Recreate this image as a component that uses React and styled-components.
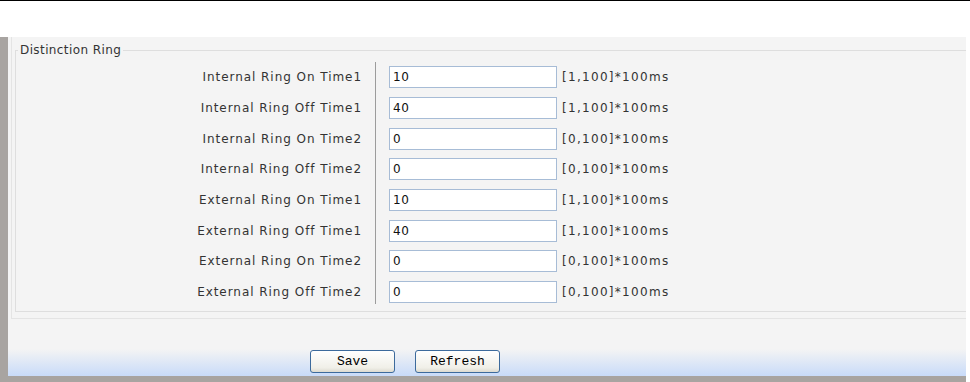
import React from "react";
import styled, { createGlobalStyle } from "styled-components";

const Global = createGlobalStyle`
  html, body { margin: 0; padding: 0; background: #fff; }
  body { font-family: Tahoma, "DejaVu Sans", Verdana, sans-serif; font-size: 12px; color: #222; }
`;

const Page = styled.div`
  width: 970px;
  height: 382px;
  overflow: hidden;
  border-top: 1px solid #000;
  box-sizing: border-box;
  padding-top: 36px;
`;

const Panel = styled.div`
  width: 966px;
  height: 345px;
  box-sizing: border-box;
  background: #f4f4f4;
  border-left: 8px solid #a8a4a1;
  border-bottom: 6px solid #a8a4a1;
  display: flex;
  flex-direction: column;
`;

const Outer = styled.div`
  margin-left: 3px;
  border-left: 1px solid #e4e4e4;
  border-bottom: 1px solid #e4e4e4;
  padding: 6px 0 6px 3px;
`;

const Fieldset = styled.fieldset`
  margin: 0;
  padding: 0 0 3px 0;
  border: 1px solid #dedede;
  border-right: none;
  min-width: 0;
`;

const Legend = styled.legend`
  padding: 0 2px;
  margin-left: 2px;
  color: #333;
  font-size: 12px;
  letter-spacing: 0.4px;
`;

const Grid = styled.div`
  display: grid;
  grid-template-columns: 346px 14px 181px 1fr;
  grid-auto-rows: 30.7px;
  padding-top: 5px;
`;

const Label = styled.div`
  grid-column: 1;
  display: flex;
  align-items: center;
  justify-content: flex-end;
  color: #333;
  letter-spacing: 0.95px;
`;

const Sep = styled.div`
  grid-column: 2;
  grid-row: 1 / span 8;
  border-right: 1px solid #9c9c9c;
  margin-bottom: 4px;
`;

const Cell = styled.div`
  grid-column: 3;
  display: flex;
  align-items: center;
  padding-left: 13px;
`;

const Input = styled.input`
  width: 168px;
  height: 22px;
  box-sizing: border-box;
  border: 1px solid #a7bcd6;
  background: #fff;
  padding: 0 3px;
  font-family: Tahoma, "DejaVu Sans", sans-serif;
  font-size: 12px;
  letter-spacing: 0.6px;
  color: #111;
  outline: none;
`;

const Hint = styled.div`
  grid-column: 4;
  display: flex;
  align-items: center;
  padding-left: 5px;
  color: #333;
  letter-spacing: 1.3px;
`;

const Spacer = styled.div`
  flex: 1;
`;

const ButtonBar = styled.div`
  height: 27px;
  background: linear-gradient(#f4f4f4, #c8dbf9);
  display: flex;
  justify-content: flex-start;
  align-items: flex-start;
  gap: 20px;
  padding-left: 302px;
`;

const Button = styled.button`
  width: 85px;
  height: 23px;
  margin-top: 1px;
  border: 1px solid #3c6a9c;
  border-radius: 3px;
  background: linear-gradient(#ffffff, #f0efe8 80%, #dcdad0);
  font-family: "Liberation Mono", "DejaVu Sans Mono", monospace;
  font-size: 13px;
  color: #000;
  padding: 0;
`;

const rows = [
  ["Internal Ring On Time1", "10", "[1,100]*100ms"],
  ["Internal Ring Off Time1", "40", "[1,100]*100ms"],
  ["Internal Ring On Time2", "0", "[0,100]*100ms"],
  ["Internal Ring Off Time2", "0", "[0,100]*100ms"],
  ["External Ring On Time1", "10", "[1,100]*100ms"],
  ["External Ring Off Time1", "40", "[1,100]*100ms"],
  ["External Ring On Time2", "0", "[0,100]*100ms"],
  ["External Ring Off Time2", "0", "[0,100]*100ms"],
];

export default function App() {
  return (
    <>
      <Global />
      <Page>
        <Panel>
          <Outer>
            <Fieldset>
              <Legend>Distinction Ring</Legend>
              <Grid>
                <Sep />
                {rows.map(([l, v, h], i) => (
                  <React.Fragment key={l}>
                    <Label style={{ gridRow: i + 1 }}>{l}</Label>
                    <Cell style={{ gridRow: i + 1 }}>
                      <Input defaultValue={v} />
                    </Cell>
                    <Hint style={{ gridRow: i + 1 }}>{h}</Hint>
                  </React.Fragment>
                ))}
              </Grid>
            </Fieldset>
          </Outer>
          <Spacer />
          <ButtonBar>
            <Button>Save</Button>
            <Button>Refresh</Button>
          </ButtonBar>
        </Panel>
      </Page>
    </>
  );
}
